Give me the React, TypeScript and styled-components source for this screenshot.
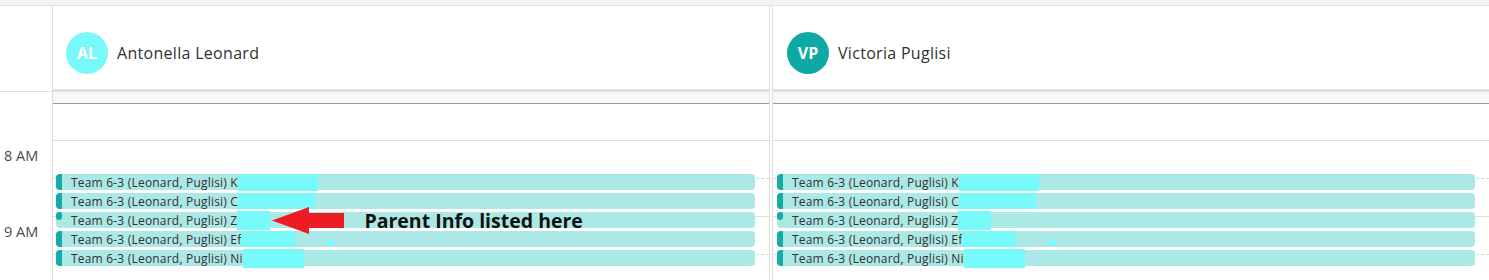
import React from "react";
import styled, {createGlobalStyle} from "styled-components";

const GlobalStyle = createGlobalStyle`
    body {
        margin: 0;
        overflow: hidden;
        background: #fff;
        font-family: "Open Sans", "Noto Sans", sans-serif;
    }
`;

const StyledPage = styled.div`
    width: 1489px;
    height: 280px;
    overflow: hidden;
    background: #fff;
`;

const StyledTopStrip = styled.div`
    height: 5px;
    background: #f3f3f3;
    border-bottom: 1px solid #e1e1e1;
`;

const StyledBoard = styled.div`
    display: grid;
    grid-template-columns: 53px 716px 720px;
`;

const StyledGutter = styled.div`
    display: flex;
    flex-direction: column;
    border-right: 1px solid #dedede;
`;

const StyledGutterHead = styled.div`
    height: 85px;
    border-bottom: 1px solid #e0e0e0;
`;

const StyledGutterSpacer = styled.div`
    height: 48px;
`;

const StyledHourLabel = styled.div`
    height: 76px;
    padding: 6px 0 0 4px;
    box-sizing: border-box;
    font-size: 14.5px;
    color: #4a4a4a;
    white-space: nowrap;
`;

const StyledColumn = styled.div<{ $divided?: boolean }>`
    display: flex;
    flex-direction: column;
    min-width: 0;
    border-left: ${props => props.$divided ? "4px double #e0e0e0" : "none"};
`;

const StyledColumnHead = styled.div<{ $inset: number }>`
    height: 83px;
    box-sizing: border-box;
    padding: 26px 0 0 ${props => props.$inset}px;
    display: flex;
    align-items: flex-start;
    gap: 9px;
`;

const StyledAvatar = styled.div<{ $color: string }>`
    width: 42px;
    height: 42px;
    border-radius: 50%;
    background: ${props => props.$color};
    color: #fff;
    display: flex;
    align-items: center;
    justify-content: center;
    font-weight: 700;
    font-size: 16px;
`;

const StyledName = styled.div`
    line-height: 42px;
    font-size: 16px;
    letter-spacing: 0.3px;
    color: #323130;
`;

const StyledHeadBand = styled.div`
    height: 3px;
    background: #dedede;
`;

const StyledAllDayBand = styled.div`
    height: 11px;
    background: #f8f8f8;
    border-bottom: 1px solid #9a9a9a;
`;

const StyledAllDayArea = styled.div`
    height: 36px;
`;

const StyledBody = styled.div`
    display: grid;
    height: 140px;
`;

const StyledSlots = styled.div`
    grid-area: 1 / 1;
    display: flex;
    flex-direction: column;
`;

const StyledSlot = styled.div<{ $half?: boolean }>`
    height: 38px;
    flex: none;
    box-sizing: border-box;
    border-top: 1px ${props => props.$half ? "dashed #dcdcdc" : "solid #e0e0e0"};
`;

const StyledEvents = styled.div<{ $left: number }>`
    grid-area: 1 / 1;
    display: flex;
    flex-direction: column;
    gap: 3px;
    padding: 34px 14px 0 ${props => props.$left}px;
`;

const StyledEvent = styled.div`
    position: relative;
    height: 16px;
    display: flex;
    align-items: center;
    background: #ace8e6;
    border-radius: 4px;
    font-size: 12px;
    letter-spacing: 0.2px;
    color: #323130;
    white-space: nowrap;
`;

const StyledStripe = styled.div<{ $short?: boolean }>`
    align-self: flex-start;
    width: 6px;
    height: ${props => props.$short ? "8px" : "16px"};
    flex: none;
    background: #13aca8;
    border-radius: ${props => props.$short ? "4px 3px 4px 4px" : "4px 0 0 4px"};
`;

const StyledTitle = styled.span`
    margin-left: 9px;
`;

const StyledRedaction = styled.span<{ $height: number }>`
    flex: none;
    height: ${props => props.$height}px;
    background: #78fafa;
`;

const StyledSpeck = styled.span`
    flex: none;
    align-self: flex-end;
    width: 6px;
    height: 7px;
    margin: 0 0 1px 33px;
    background: #78fafa;
`;

const StyledNote = styled.div`
    position: relative;
    z-index: 1;
    display: flex;
    align-items: center;
    margin-left: 2px;
    height: 27px;
`;

const StyledNoteText = styled.span`
    margin-left: 20px;
    font-size: 19.5px;
    font-weight: 700;
    letter-spacing: 0;
    color: #111;
`;

interface Booking {
    initial: string;
    width: number;
    height: number;
    short?: boolean;
    speck?: boolean;
    note?: boolean;
}

const bookings: Booking[] = [
    {initial: "K", width: 80, height: 17},
    {initial: "C", width: 77, height: 16},
    {initial: "Z", width: 33, height: 19, short: true, note: true},
    {initial: "Ef", width: 54, height: 16, speck: true},
    {initial: "Ni", width: 61, height: 19},
];

const Arrow = () => (
    <svg width="72" height="27" viewBox="0 0 72 27">
        <polygon points="0,13.5 37,0 37,6 72,6 72,21 37,21 37,27" fill="#ed1c24"/>
    </svg>
);

interface PersonColumnProps {
    initials: string;
    name: string;
    color: string;
    divided?: boolean;
    withNote?: boolean;
}

const PersonColumn: React.FC<PersonColumnProps> = ({initials, name, color, divided, withNote}) => {
    return <StyledColumn $divided={divided}>
        <StyledColumnHead $inset={divided ? 14 : 13}>
            <StyledAvatar $color={color}>{initials}</StyledAvatar>
            <StyledName>{name}</StyledName>
        </StyledColumnHead>
        <StyledHeadBand/>
        <StyledAllDayBand/>
        <StyledAllDayArea/>
        <StyledBody>
            <StyledSlots>
                <StyledSlot/>
                <StyledSlot $half/>
                <StyledSlot/>
                <StyledSlot $half/>
            </StyledSlots>
            <StyledEvents $left={divided ? 4 : 3}>
                {bookings.map((b, i) => (
                    <StyledEvent key={i}>
                        <StyledStripe $short={b.short}/>
                        <StyledTitle>Team 6-3 (Leonard, Puglisi) {b.initial}</StyledTitle>
                        <StyledRedaction $height={b.height} style={{width: b.width}}/>
                        {b.speck && <StyledSpeck/>}
                        {b.note && withNote && <StyledNote>
                            <Arrow/>
                            <StyledNoteText>Parent Info listed here</StyledNoteText>
                        </StyledNote>}
                    </StyledEvent>
                ))}
            </StyledEvents>
        </StyledBody>
    </StyledColumn>;
};

const App: React.FC = () => {
    return <StyledPage>
        <GlobalStyle/>
        <StyledTopStrip/>
        <StyledBoard>
            <StyledGutter>
                <StyledGutterHead/>
                <StyledGutterSpacer/>
                <StyledHourLabel>8 AM</StyledHourLabel>
                <StyledHourLabel>9 AM</StyledHourLabel>
            </StyledGutter>
            <PersonColumn initials="AL" name="Antonella Leonard" color="#78f9f9" withNote/>
            <PersonColumn initials="VP" name="Victoria Puglisi" color="#0fa9a5" divided/>
        </StyledBoard>
    </StyledPage>;
};

export default App;
